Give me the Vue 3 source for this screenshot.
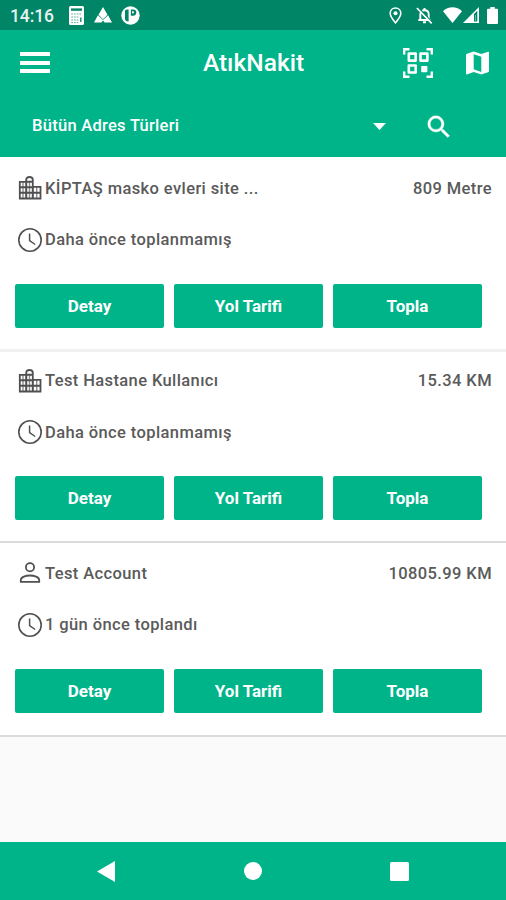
<script setup>
const records = [
  { id: 1, icon: 'building', name: 'KİPTAŞ masko evleri site ...', distance: '809 Metre', last: 'Daha önce toplanmamış' },
  { id: 2, icon: 'building', name: 'Test Hastane Kullanıcı', distance: '15.34 KM', last: 'Daha önce toplanmamış' },
  { id: 3, icon: 'person', name: 'Test Account', distance: '10805.99 KM', last: '1 gün önce toplandı' },
]
const actions = ['Detay', 'Yol Tarifi', 'Topla']
</script>

<template>
  <div class="screen">
    <div class="status">
      <span class="time">14:16</span>
      <svg class="calc" width="15" height="19" viewBox="0 0 15 19">
        <rect width="15" height="19" rx="1.5" fill="#fff" />
        <path d="M2 2.400h11v2.400H2z" fill="#008566" />
        <path d="M2.300 8h10.400M2.300 11h7M2.300 14h7M2.300 16.600h7" stroke="#008566" stroke-width="1" stroke-dasharray="1.700 1" opacity=".65" />
        <path d="M11.800 11.500v4.500" stroke="#008566" stroke-width="1.300" />
      </svg>
      <svg class="peaks" width="18" height="16" viewBox="0 0 18 16">
        <path d="M9 0l4.500 7.800L9 12.300 4.500 7.800zM3.900 8.300L9 13l5.100-4.700L18 15.600h-7.400L9 13.600l-1.600 2H0z" fill="#fff" />
      </svg>
      <svg class="disc" width="19" height="19" viewBox="0 0 19 19">
        <circle cx="9.500" cy="9.500" r="9.200" fill="#fff" />
        <path d="M7.600 3.500H5.500q-1.500 0-1.500 1.500v8q0 2 3.600 2.500z" fill="#008566" />
        <path d="M9.900 3.500h2.300a3 3 0 0 1 0 6.200H9.900z" fill="#008566" />
        <path d="M11 5.200h1.800v2H11z" fill="#fff" />
      </svg>
      <span class="grow"></span>
      <svg class="pin" width="13" height="17" viewBox="0 0 13 17">
        <path d="M6.500 1C3.400 1 1.200 3.300 1.200 6.200c0 3.500 3.800 7.800 5.300 9.600 1.500-1.800 5.300-6.100 5.300-9.600C11.800 3.300 9.600 1 6.500 1z" fill="none" stroke="#fff" stroke-width="1.600" />
        <circle cx="6.500" cy="6.200" r="2" fill="#fff" />
      </svg>
      <svg class="bell" width="17" height="17" viewBox="0 0 17 17">
        <path d="M4.300 12.800V7.500C4.300 5 6 3.300 8.500 3.300S12.700 5 12.700 7.500v5.300" fill="none" stroke="#fff" stroke-width="1.900" />
        <path d="M2.300 13h12.400M8.500 1v2.200M7 15.300h3" stroke="#fff" stroke-width="2" />
        <path d="M2.200.2l14.500 15.600" stroke="#008566" stroke-width="1.300" />
        <path d="M.9 1l14.800 15.400" stroke="#fff" stroke-width="1.700" />
      </svg>
      <svg class="wifi" width="19" height="16" viewBox="0 0 19 16">
        <path d="M9.500 16L0 4.200C2.500 1.600 5.900.3 9.500.3S16.500 1.600 19 4.200z" fill="#fff" />
      </svg>
      <svg class="signal" width="16" height="16" viewBox="0 0 16 16">
        <path d="M0 16L16 0v16z" fill="#fff" />
        <path d="M11 7l3.300-3.300v10.700H11z" fill="#008566" />
        <path d="M12 8h1v6h-1z" fill="#fff" opacity=".4" />
      </svg>
      <svg class="battery" width="11" height="17" viewBox="0 0 11 17">
        <path d="M3.300 0h4.400v1.800H10q1 0 1 1V16q0 1-1 1H1q-1 0-1-1V2.800q0-1 1-1h2.300z" fill="#fff" />
      </svg>
    </div>

    <header class="header">
      <div class="bar">
        <div class="side">
          <div class="burger"><i></i><i></i><i></i></div>
        </div>
        <h1>AtıkNakit</h1>
        <div class="side tools">
          <svg width="30" height="30" viewBox="0 0 30 30" fill="none" stroke="#fff">
            <path d="M1.200 6.500V1.200h5.300M23.500 1.200h5.300v5.300M28.800 23.500v5.300h-5.300M6.500 28.800H1.200v-5.300" stroke-width="2.400" />
            <path d="M5.800 5.600h6.900v7H5.800zM17.500 5.600h6.900v7h-6.900zM5.800 17.500h6.900v7H5.800z" stroke-width="2.600" stroke-linejoin="round" />
            <rect x="18.200" y="18" width="6.200" height="6.200" rx=".8" fill="#fff" stroke="none" />
          </svg>
          <svg class="map" width="23" height="24" viewBox="0 0 23 24">
            <path d="M22.200.7L15.300 3 7.700.5.900 2.700Q0 3 0 3.900v18.800q0 .9.900.7L7.700 21l7.600 2.500 6.800-2.300q.9-.3.900-1.200V1.300q0-.9-.8-.6zM15.300 20.900l-7.600-2.600V3.200l7.600 2.600z" fill="#fff" />
          </svg>
        </div>
      </div>
      <div class="filter">
        <span class="filter-label">Bütün Adres Türleri</span>
        <svg class="caret" width="13" height="7" viewBox="0 0 13 7"><path d="M0 0h13L6.500 7z" fill="#fff" /></svg>
        <svg width="30" height="30" viewBox="0 0 24 24">
          <path stroke="#fff" stroke-width=".3" fill="#fff" d="M15.500 14h-.79l-.28-.27A6.470 6.470 0 0 0 16 9.500 6.500 6.500 0 1 0 9.500 16c1.610 0 3.090-.59 4.230-1.570l.27.28v.79l5 4.990L20.490 19l-4.990-5zm-6 0C7.010 14 5 11.990 5 9.500S7.010 5 9.500 5 14 7.010 14 9.500 11.990 14 9.500 14z" />
        </svg>
      </div>
    </header>

    <main class="list">
      <section v-for="r in records" :key="r.id" class="card" :class="'card-' + r.id">
        <div class="row">
          <svg v-if="r.icon === 'building'" class="icon" width="24" height="24" viewBox="0 0 24 24" fill="none" stroke="#505050">
            <path d="M1.800 22.500V5.800h6.400V3.800q0-2.800 3.300-2.800t3.300 2.800v7h7.700v11.700z" stroke-width="1.800" />
            <path d="M8.200 5.800v16.700M14.800 10.800v11.700M1.800 11.300h13M1.800 16.800h20.700M8.200 5.800h6.600" stroke-width="2" />
            <path d="M5 5.800v16.700M11.500 6v16.500M18.700 11v11.500" stroke-width="1.400" opacity=".65" />
          </svg>
          <svg v-else class="icon" width="24" height="24" viewBox="0 0 24 24" fill="none" stroke="#505050" stroke-width="1.800">
            <circle cx="12" cy="6.300" r="4.100" />
            <path d="M2.800 20.900v-2c0-3 5.200-4.400 9.200-4.400s9.200 1.400 9.200 4.400v2z" />
          </svg>
          <span class="name">{{ r.name }}</span>
          <span class="distance">{{ r.distance }}</span>
        </div>
        <div class="row second">
          <svg class="icon" width="24" height="24" viewBox="0 0 24 24" fill="none" stroke="#505050">
            <circle cx="12" cy="12" r="11.200" stroke-width="1.600" />
            <path d="M11.600 5.500v7.200l5.600 3.800" stroke-width="1.500" />
          </svg>
          <span class="name">{{ r.last }}</span>
        </div>
        <div class="actions">
          <button v-for="a in actions" :key="a">{{ a }}</button>
        </div>
      </section>
    </main>

    <nav class="nav">
      <svg width="18" height="21" viewBox="0 0 18 21"><path d="M18 0v21L0 10.500z" fill="#fff" /></svg>
      <svg width="18" height="18" viewBox="0 0 18 18"><circle cx="9" cy="9" r="9" fill="#fff" /></svg>
      <svg width="19" height="19" viewBox="0 0 19 19"><rect width="19" height="19" rx="1.500" fill="#fff" /></svg>
    </nav>
  </div>
</template>

<style>
body { background: #fafafa; }
</style>

<style scoped>
.screen {
  width: 506px;
  height: 900px;
  display: flex;
  flex-direction: column;
  overflow: hidden;
  background: #fafafa;
  font-family: Roboto, "Liberation Sans", sans-serif;
}
svg { display: block; flex: none; }
.status {
  height: 30px;
  flex: none;
  box-sizing: border-box;
  padding: 0 8px 0 10px;
  display: flex;
  align-items: center;
  background: #008566;
  color: #fff;
}
.time { width: 59px; font-size: 17.500px; font-weight: 500; line-height: 30px; letter-spacing: -0.100px; opacity: .9; padding-top: 1px; }
.peaks { margin-left: 10px; }
.disc { margin-left: 9px; }
.grow { flex: 1; }
.bell { margin-left: 14px; }
.wifi { margin-left: 10px; }
.signal { margin-left: 1px; }
.battery { margin-left: 8px; }
.header { height: 127px; flex: none; background: #00b48a; color: #fff; }
.bar { height: 66px; padding: 0 17px 0 20px; display: flex; align-items: center; }
.side { flex: 1; }
.burger { width: 30px; display: grid; gap: 4.500px; margin-top: -1px; }
.burger i { height: 4px; background: #fff; }
h1 { margin: 0; padding-right: 2px; font-size: 24.500px; font-weight: 500; line-height: 30px; }
.tools { display: flex; justify-content: flex-end; align-items: center; gap: 33px; }
.filter { height: 61px; display: flex; align-items: center; padding: 0 52px 0 32px; }
.filter-label { flex: 1; font-size: 16.500px; font-weight: 500; letter-spacing: .280px; padding-bottom: 2px; }
.caret { margin-right: 38px; }
.list { flex: 1; }
.card {
  height: 194px;
  box-sizing: border-box;
  padding: 19px 14px 0 18px;
  background: #fff;
  border-bottom: 2px solid #dcdcdc;
}
.card-1 { height: 195px; border-bottom: 3px solid #f0f0f0; }
.card-2 { height: 191px; padding-top: 16.500px; }
.card-3 { padding-top: 18px; }
.row { height: 24px; display: flex; align-items: center; color: #5a5a5a; font-size: 16.500px; font-weight: 500; letter-spacing: .390px; }
.name { flex: 1; margin-left: 3px; white-space: nowrap; }
.second { margin-top: 27.500px; }
.actions { display: grid; grid-template-columns: repeat(3, 149px); gap: 10px; margin: 32px 0 0 -3px; }
button {
  height: 44px;
  padding: 0;
  border: 0;
  border-radius: 2px;
  background: #00b48a;
  color: #fff;
  font-family: inherit;
  font-size: 17px;
  font-weight: 700;
}
.nav {
  height: 58px;
  flex: none;
  box-sizing: border-box;
  padding: 0 97px;
  display: flex;
  align-items: center;
  justify-content: space-between;
  background: #00b48a;
}
</style>
